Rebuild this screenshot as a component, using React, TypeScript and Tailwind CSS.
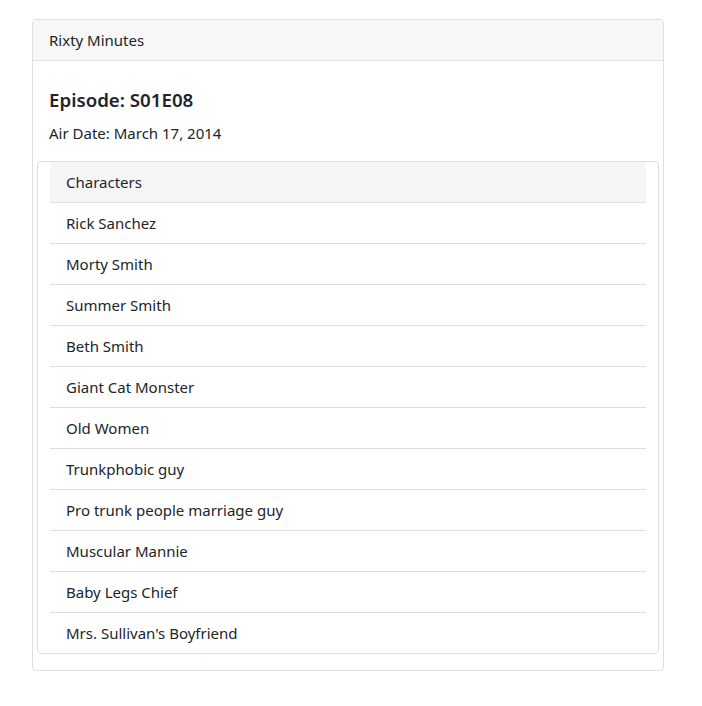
import React from "react";

const chars = [
  "Rick Sanchez",
  "Morty Smith",
  "Summer Smith",
  "Beth Smith",
  "Giant Cat Monster",
  "Old Women",
  "Trunkphobic guy",
  "Pro trunk people marriage guy",
  "Muscular Mannie",
  "Baby Legs Chief",
  "Mrs. Sullivan's Boyfriend",
];

export default function App() {
  return (
    <div
      className="bg-white w-[702px] h-[706px] pt-[19px] pl-[32px] text-[#212529]"
      style={{ fontFamily: '"Noto Sans", "Open Sans", sans-serif' }}
    >
      <div className="w-[632px] border border-[#dfdfdf] rounded-[4px] overflow-hidden">
        <div className="h-[41px] bg-[#f7f7f7] border-b border-[#dfdfdf] px-4 flex items-center text-[15px]">
          Rixty Minutes
        </div>
        <div className="px-1 pb-4">
          <div className="px-3 pt-[27px]">
            <div className="text-[18.7px] leading-[24px] font-semibold">Episode: S01E08</div>
            <div className="mt-[9px] text-[15px] leading-[24px]">Air Date: March 17, 2014</div>
          </div>
          <div className="mt-4 border border-[#dfdfdf] rounded-[4px] px-3">
            <div className="h-[41px] bg-[#f5f5f5] border-b border-[#dfdfdf] px-4 flex items-center text-[15px]">
              Characters
            </div>
            {chars.map((c, i) => (
              <div
                key={c}
                className={
                  i < chars.length - 1
                    ? "h-[41px] border-b border-[#dfdfdf] px-4 flex items-center text-[15px]"
                    : "h-[40px] px-4 flex items-center text-[15px]"
                }
              >
                {c}
              </div>
            ))}
          </div>
        </div>
      </div>
    </div>
  );
}
